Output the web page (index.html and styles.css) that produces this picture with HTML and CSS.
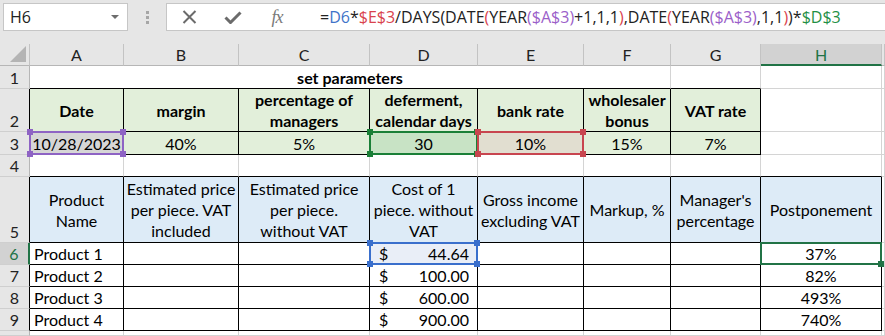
FILE: index.html
```html
<!DOCTYPE html>
<html lang="en">
<head>
    <meta charset="UTF-8">
    <title>Sheet - set parameters</title>
    <link rel="stylesheet" href="styles.css">
</head>
<body>

    <!-- Name box + formula bar -->
    <div class="topbar">
        <div class="namebox">
            <span>H6</span>
            <svg width="8" height="5" viewBox="0 0 8 5"><path d="M0 0h8L4 4z" fill="#6d6d6d"/></svg>
        </div>
        <div class="dots"><i></i><i></i><i></i></div>
        <div class="fbox">
            <span class="fbtn">
                <svg width="15" height="14" viewBox="0 0 15 14"><path d="M1.5 1l12 12M13.5 1l-12 12" stroke="#6b6b6b" stroke-width="2" fill="none"/></svg>
            </span>
            <span class="fbtn">
                <svg width="18" height="13" viewBox="0 0 18 13"><path d="M1.5 6.5l5 5L16.5 1.5" stroke="#6b6b6b" stroke-width="3" fill="none"/></svg>
            </span>
            <span class="fbtn fx">fx</span>
            <div class="formula">=<span class="f-blue">D6</span>*<span class="f-red">$E$3</span>/DAYS(DATE<span class="f-red">(</span>YEAR<span class="f-purple">($A$3)</span>+1,1,1<span class="f-red">)</span>,DATE<span class="f-red">(</span>YEAR<span class="f-purple">($A$3)</span>,1,1<span class="f-red">)</span>)*<span class="f-green">$D$3</span></div>
        </div>
    </div>

    <!-- Worksheet grid -->
    <div class="sheet">
        <!-- column headers -->
        <div class="ch corner"><svg width="16" height="16" viewBox="0 0 16 16"><path d="M16 0V16H0z" fill="#b4b4b4"/></svg></div>
        <div class="ch">A</div>
        <div class="ch">B</div>
        <div class="ch">C</div>
        <div class="ch">D</div>
        <div class="ch">E</div>
        <div class="ch">F</div>
        <div class="ch">G</div>
        <div class="ch sel">H</div>
        <div class="ch"></div>

        <!-- row 1 -->
        <div class="rh">1</div>
        <div class="merge bb bold">set parameters</div>
        <div class="bb"></div>
        <div></div>
        <div></div>

        <!-- row 2 -->
        <div class="rh br">2</div>
        <div class="b green bold">Date</div>
        <div class="b green bold">margin</div>
        <div class="b green bold">percentage of<br>managers</div>
        <div class="b green bold">deferment,<br>calendar days</div>
        <div class="b green bold">bank rate</div>
        <div class="b green bold">wholesaler<br>bonus</div>
        <div class="b green bold">VAT rate</div>
        <div></div>
        <div></div>

        <!-- row 3 -->
        <div class="rh br">3</div>
        <div class="b green val fill-grey">10/28/2023<span class="rng purple"><i class="hd tl"></i><i class="hd tr"></i><i class="hd bl"></i><i class="hd br"></i></span></div>
        <div class="b green val">40%</div>
        <div class="b green val">5%</div>
        <div class="b green val fill-green">30<span class="rng dgreen"><i class="hd tl"></i><i class="hd tr"></i><i class="hd bl"></i><i class="hd br"></i></span></div>
        <div class="b green val fill-beige">10%<span class="rng red"><i class="hd tl"></i><i class="hd tr"></i><i class="hd bl"></i><i class="hd br"></i></span></div>
        <div class="b green val">15%</div>
        <div class="b green val">7%</div>
        <div></div>
        <div></div>

        <!-- row 4 -->
        <div class="rh">4</div>
        <div class="bb"></div>
        <div class="bb"></div>
        <div class="bb"></div>
        <div class="bb"></div>
        <div class="bb"></div>
        <div class="bb"></div>
        <div class="bb"></div>
        <div class="bb"></div>
        <div></div>

        <!-- row 5 -->
        <div class="rh br">5</div>
        <div class="b blue">Product<br>Name</div>
        <div class="b blue">Estimated price<br>per piece. VAT<br>included</div>
        <div class="b blue">Estimated price<br>per piece.<br>without VAT</div>
        <div class="b blue">Cost of 1<br>piece. without<br>VAT</div>
        <div class="b blue">Gross income<br>excluding VAT</div>
        <div class="b blue">Markup, %</div>
        <div class="b blue">Manager's<br>percentage</div>
        <div class="b blue">Postponement</div>
        <div></div>

        <!-- row 6 -->
        <div class="rh br sel">6</div>
        <div class="b left">Product 1</div>
        <div class="b"></div>
        <div class="b"></div>
        <div class="b acct fill-blue"><span>$</span><span>44.64</span><span class="rng dblue"><i class="hd tl"></i><i class="hd tr"></i><i class="hd bl"></i><i class="hd br"></i></span></div>
        <div class="b"></div>
        <div class="b"></div>
        <div class="b"></div>
        <div class="b val">37%<span class="rng active"><i class="hd br"></i></span></div>
        <div></div>

        <!-- row 7 -->
        <div class="rh br">7</div>
        <div class="b left">Product 2</div>
        <div class="b"></div>
        <div class="b"></div>
        <div class="b acct"><span>$</span><span>100.00</span></div>
        <div class="b"></div>
        <div class="b"></div>
        <div class="b"></div>
        <div class="b val">82%</div>
        <div></div>

        <!-- row 8 -->
        <div class="rh br">8</div>
        <div class="b left">Product 3</div>
        <div class="b"></div>
        <div class="b"></div>
        <div class="b acct"><span>$</span><span>600.00</span></div>
        <div class="b"></div>
        <div class="b"></div>
        <div class="b"></div>
        <div class="b val">493%</div>
        <div></div>

        <!-- row 9 -->
        <div class="rh br">9</div>
        <div class="b left">Product 4</div>
        <div class="b"></div>
        <div class="b"></div>
        <div class="b acct"><span>$</span><span>900.00</span></div>
        <div class="b"></div>
        <div class="b"></div>
        <div class="b"></div>
        <div class="b val">740%</div>
        <div></div>

        <!-- row 10 (cut off) -->
        <div class="rh"></div>
        <div></div><div></div><div></div><div></div><div></div><div></div><div></div><div></div><div></div>
    </div>

</body>
</html>
```

FILE: styles.css
```css
body {
    margin: 0;
    background: #e6e6e6;
    font-family: Lato, "Liberation Sans", sans-serif;
    color: #000;
    overflow: hidden;
}

/* Top bar */
.topbar {
    height: 44px;
    display: flex;
    align-items: flex-start;
    padding-top: 3px;
    box-sizing: border-box;
}
.namebox {
    margin-left: 3px;
    width: 125px;
    height: 28px;
    box-sizing: border-box;
    background: #fff;
    border: 1px solid #c6c6c6;
    display: flex;
    align-items: center;
    justify-content: space-between;
    padding: 0 8px 0 6px;
    font-family: "Open Sans", sans-serif;
    font-size: 16px;
    color: #222;
}
.dots {
    width: 38px;
    height: 28px;
    display: flex;
    flex-direction: column;
    align-items: center;
    justify-content: center;
    gap: 2px;
}
.dots i {
    width: 3px;
    height: 3px;
    background: #a6a6a6;
}
.fbox {
    flex: 1;
    height: 28px;
    box-sizing: border-box;
    background: #fff;
    border: 1px solid #c6c6c6;
    border-right: none;
    display: flex;
    align-items: center;
}
.fbtn {
    width: 44px;
    display: flex;
    justify-content: center;
    align-items: center;
}
.fx {
    font-family: "Liberation Serif", serif;
    font-style: italic;
    font-size: 18px;
    color: #7a7a7a;
    letter-spacing: -1px;
}
.formula {
    padding-left: 21px;
    font-family: "Open Sans", sans-serif;
    font-size: 16px;
    color: #222;
    white-space: nowrap;
}
.f-blue { color: #3f74c9; }
.f-red { color: #d9434e; }
.f-purple { color: #9b5fc9; }
.f-green { color: #1f8f45; }

/* Sheet */
.sheet {
    display: grid;
    grid-template-columns: 30px 94px 115px 131px 108px 106px 87px 90px 121px 1fr;
    grid-template-rows: 22px 23px 43px 23px 22px 66px 22px 22px 22px 22px 1fr;
    height: 292px;
    background: #fff;
    font-size: 16px;
    line-height: 21px;
}
.sheet > div {
    position: relative;
    box-sizing: border-box;
    border-right: 1px solid #d4d4d4;
    border-bottom: 1px solid #d4d4d4;
    display: flex;
    align-items: center;
    justify-content: center;
    text-align: center;
    white-space: nowrap;
    min-width: 0;
}

.sheet > .ch {
    background: #e6e6e6;
    border-right-color: #c3c3c3;
    border-bottom-color: #b6b6b6;
    color: #222;
}
.sheet > .corner {
    justify-content: flex-end;
    align-items: flex-end;
    padding: 0 3px 3px 0;
}
.sheet > .rh {
    background: #e6e6e6;
    border-right-color: #b6b6b6;
    border-bottom-color: #cfcfcf;
    color: #222;
    align-items: flex-end;
}
.sheet > .ch.sel {
    background: #d2d2d2;
    color: #217346;
    border-bottom: 2px solid #217346;
}
.sheet > .rh.sel {
    background: #d2d2d2;
    color: #217346;
    border-right: 2px solid #217346;
}

/* borders */
.sheet > .b { border-right-color: #000; border-bottom-color: #000; }
.sheet > .bb { border-bottom-color: #000; }
.sheet > .br { border-right-color: #000; }
.sheet > .merge { grid-column: span 6; }

.bold { font-weight: bold; }
.green { background: #e2efda; }
.blue { background: #ddebf7; }
.sheet > .left { justify-content: flex-start; padding-left: 4px; }
.sheet > .acct {
    justify-content: space-between;
    padding: 0 8px 0 9px;
}
.sheet > .val { align-items: flex-end; }

.fill-grey { background: #d6d6d6; }
.fill-green { background: #c8e3c5; }
.fill-beige { background: #e1ded0; }
.fill-blue { background: #e9eef7; }

/* range highlights */
.rng {
    position: absolute;
    left: -1px;
    top: -1px;
    right: -1px;
    bottom: -1px;
    border: 2px solid currentColor;
    z-index: 2;
}
.rng .hd {
    position: absolute;
    width: 6px;
    height: 6px;
    background: currentColor;
}
.hd.tl { left: -4px; top: -4px; }
.hd.tr { right: -4px; top: -4px; }
.hd.bl { left: -4px; bottom: -4px; }
.hd.br { right: -4px; bottom: -4px; }
.purple { color: #8e63c4; }
.dgreen { color: #1a7f37; }
.red { color: #c8454f; }
.dblue { color: #3a6fcc; }
.active { color: #217346; }
```
